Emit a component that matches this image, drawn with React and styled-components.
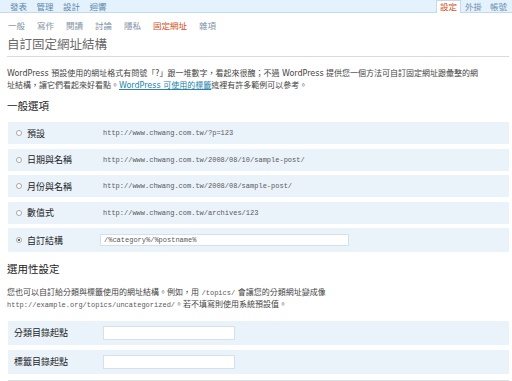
import React from "react"
import styled, { createGlobalStyle } from "styled-components"

const GlobalStyle = createGlobalStyle`
  body {
    margin: 0;
    background: #ffffff;
    font-family: "DejaVu Sans", "Noto Sans CJK TC", sans-serif;
    color: #333333;
  }
`

const mainMenu = ["發表", "管理", "設計", "迴響"]
const rightMenu = ["設定", "外掛", "帳號"]
const subMenu = ["一般", "寫作", "閱讀", "討論", "隱私", "固定網址", "雜項"]

const options = [
  { label: "預設", example: "http://www.chwang.com.tw/?p=123" },
  { label: "日期與名稱", example: "http://www.chwang.com.tw/2008/08/10/sample-post/" },
  { label: "月份與名稱", example: "http://www.chwang.com.tw/2008/08/sample-post/" },
  { label: "數值式", example: "http://www.chwang.com.tw/archives/123" },
]

export default function App() {
  return (
    <>
      <GlobalStyle />
      <TopBar>
        <MainMenu>
          {mainMenu.map((item) => (
            <TopLink key={item}>{item}</TopLink>
          ))}
        </MainMenu>
        <RightMenu>
          {rightMenu.map((item, i) => (
            <TopTab key={item} active={i === 0}>
              {item}
            </TopTab>
          ))}
        </RightMenu>
      </TopBar>

      <Wrap>
        <SubMenu>
          {subMenu.map((item) => (
            <SubLink key={item} active={item === "固定網址"}>
              {item}
            </SubLink>
          ))}
        </SubMenu>

        <Title>自訂固定網址結構</Title>

        <Para>
          WordPress 預設使用的網址格式有問號「?」跟一堆數字，看起來很醜；不過 WordPress 提供您一個方法可自訂固定網址跟彙整的網
          <br />
          址結構，讓它們看起來好看點。<Link>WordPress 可使用的標籤</Link>這裡有許多範例可以參考。
        </Para>

        <Heading>一般選項</Heading>

        <Rows>
          {options.map((opt) => (
            <Row key={opt.label}>
              <Radio />
              <Label>{opt.label}</Label>
              <Code>{opt.example}</Code>
            </Row>
          ))}
          <Row tall>
            <Radio checked />
            <Label>自訂結構</Label>
            <Field wide>/%category%/%postname%</Field>
          </Row>
        </Rows>

        <Heading spaced>選用性設定</Heading>

        <Para>
          您也可以自訂給分類與標籤使用的網址結構。例如，用 <Code>/topics/</Code> 會讓您的分類網址變成像
          <br />
          <Code>http://example.org/topics/uncategorized/</Code>。若不填寫則使用系統預設值。
        </Para>

        <Rows optional>
          <Row tall plain>
            <Label wide>分類目錄起點</Label>
            <Field />
          </Row>
          <Row tall plain>
            <Label wide>標籤目錄起點</Label>
            <Field />
          </Row>
        </Rows>

        <Footer />
      </Wrap>
    </>
  )
}

const TopBar = styled.div`
  display: flex;
  justify-content: space-between;
  height: 12px;
  background: #e4f2fd;
  border-bottom: 1px solid #c6d9e9;
  font-family: "Noto Sans CJK TC", sans-serif;
  font-size: 8.5px;
  line-height: 12px;
`

const MainMenu = styled.div`
  display: flex;
  gap: 9.5px;
  padding-left: 10px;
`

const TopLink = styled.span`
  color: #5d87aa;
`

const RightMenu = styled.div`
  display: flex;
  padding-right: 1px;
`

const TopTab = styled.span`
  padding: 0 3px;
  height: 13px;
  box-sizing: border-box;
  color: ${(p) => (p.active ? "#d54e21" : "#6b8fad")};
  background: ${(p) => (p.active ? "#ffffff" : "transparent")};
  border: 1px solid ${(p) => (p.active ? "#c6d9e9" : "transparent")};
  border-bottom: none;
  line-height: 11px;
`

const Wrap = styled.div`
  padding: 0 3px 0 7px;
`

const SubMenu = styled.div`
  display: flex;
  gap: 12px;
  padding: 7px 0 0 1px;
  font-family: "Noto Sans CJK TC", sans-serif;
  font-size: 8.5px;
  line-height: 11px;
`

const SubLink = styled.span`
  color: ${(p) => (p.active ? "#d54e21" : "#7f93a5")};
`

const Title = styled.h2`
  margin: 5px 0 0;
  padding-bottom: 4px;
  border-bottom: 1px solid #dadada;
  font-family: "Noto Sans CJK TC", sans-serif;
  font-size: 12.5px;
  font-weight: normal;
  line-height: 16px;
  color: #6a6a6a;
`

const Para = styled.p`
  margin: 10.5px 0 0;
  font-size: 8px;
  line-height: 12px;
  color: #444444;
  white-space: nowrap;
`

const Link = styled.a`
  color: #2583ad;
  text-decoration: underline;
`

const Heading = styled.h3`
  margin: ${(p) => (p.spaced ? "10px" : "7.5px")} 0 0;
  font-family: "Noto Sans CJK TC", sans-serif;
  font-size: 10.5px;
  font-weight: normal;
  line-height: 14px;
  color: #222222;
`

const Rows = styled.div`
  display: flex;
  flex-direction: column;
  gap: ${(p) => (p.optional ? "5px" : "4.5px")};
  margin: ${(p) => (p.optional ? "10px" : "9px")} 0 0 1px;
`

const Row = styled.div`
  display: flex;
  align-items: center;
  height: ${(p) => (p.tall ? "24px" : "22px")};
  padding-left: ${(p) => (p.plain ? "6px" : "8px")};
  background: #eaf2fa;
`

const Radio = styled.span`
  position: relative;
  width: 6px;
  height: 6px;
  margin-right: 5px;
  border: 1px solid #a8a8a8;
  border-radius: 50%;
  background: #ffffff;
  box-sizing: border-box;

  &::after {
    content: "";
    display: ${(p) => (p.checked ? "block" : "none")};
    position: absolute;
    left: 1px;
    top: 1px;
    width: 2px;
    height: 2px;
    border-radius: 50%;
    background: #333333;
  }
`

const Label = styled.span`
  width: ${(p) => (p.wide ? "89px" : "76px")};
  flex-shrink: 0;
  font-family: "Noto Sans CJK TC", sans-serif;
  font-size: 9px;
  color: #222222;
`

const Code = styled.code`
  font-family: "Liberation Mono", monospace;
  font-size: 7px;
  color: #5a5a5a;
`

const Field = styled.div`
  width: ${(p) => (p.wide ? "249px" : "132px")};
  height: ${(p) => (p.wide ? "12px" : "14px")};
  margin-left: ${(p) => (p.wide ? "-3px" : "0")};
  padding-left: 3px;
  box-sizing: border-box;
  background: #ffffff;
  border: 1px solid #d3e1ec;
  font-family: "Liberation Mono", monospace;
  font-size: 7px;
  line-height: 10px;
  color: #5a5a5a;
`

const Footer = styled.div`
  margin: 6px 0 0 1px;
  border-top: 1px solid #dddddd;
  height: 4px;
`
